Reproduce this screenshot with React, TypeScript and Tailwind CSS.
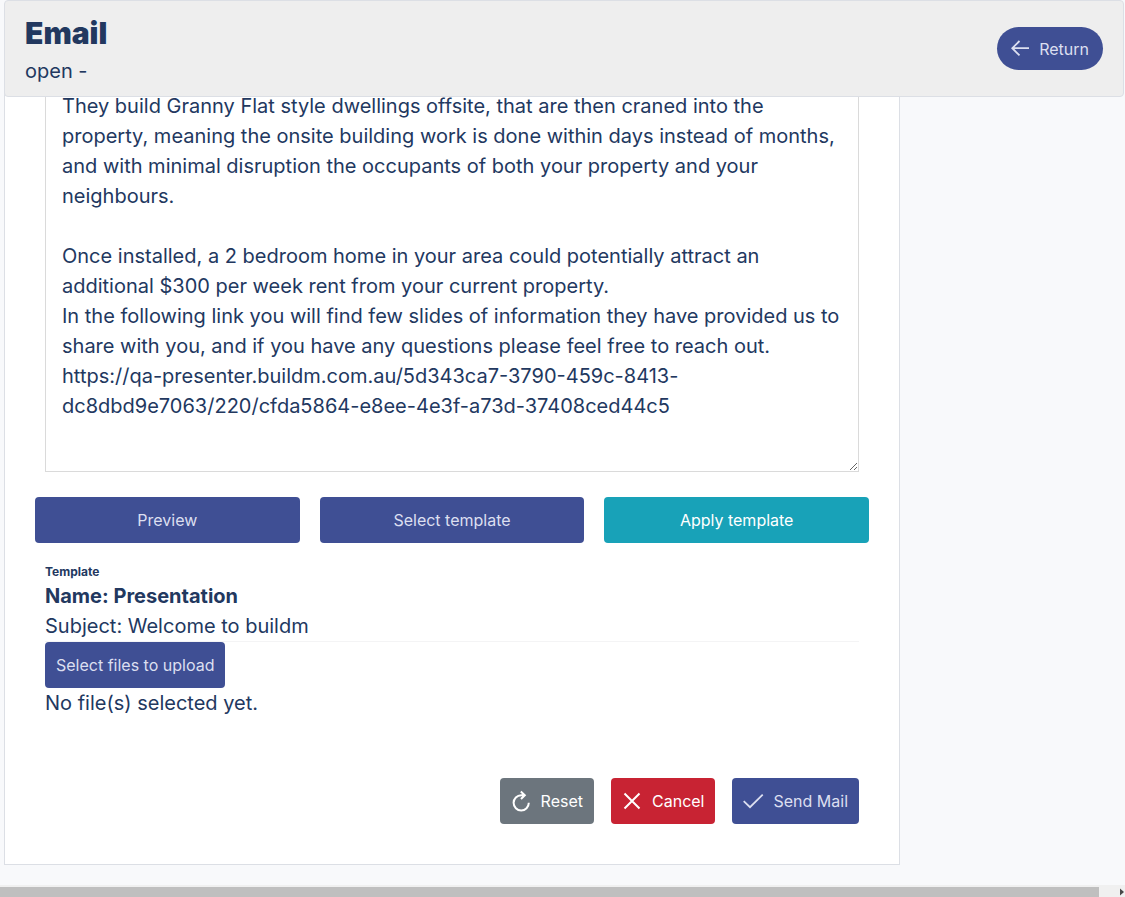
import React from "react";

const message = `They build Granny Flat style dwellings offsite, that are then craned into the property, meaning the onsite building work is done within days instead of months, and with minimal disruption the occupants of both your property and your neighbours.

Once installed, a 2 bedroom home in your area could potentially attract an additional $300 per week rent from your current property.
In the following link you will find few slides of information they have provided us to share with you, and if you have any questions please feel free to reach out.
https://qa-presenter.buildm.com.au/5d343ca7-3790-459c-8413-dc8dbd9e7063/220/cfda5864-e8ee-4e3f-a73d-37408ced44c5
`;

function Icon({ children }: { children: React.ReactNode }) {
  return (
    <svg
      viewBox="0 0 20 20"
      className="size-5 shrink-0 overflow-visible"
      fill="none"
      stroke="currentColor"
      strokeWidth="2"
      aria-hidden="true"
    >
      {children}
    </svg>
  );
}

const base = "flex h-[46px] items-center justify-center rounded text-base";
const indigo = "bg-[#3f4f94] text-[#dcdff0]";

export default function App() {
  return (
    <div className="flex min-h-screen flex-col bg-[#f8f9fb] font-[Inter,sans-serif] text-xl leading-[30px] text-[#22385f]">
      <header className="relative z-10 ml-1 mr-px flex h-[97px] items-center justify-between rounded border border-[#dcdfe5] bg-[#eeeeee] px-5">
        <div>
          <h1 className="text-[30px] leading-[45px] font-black">Email</h1>
          <p>open -</p>
        </div>
        <button type="button" className={`flex h-[43px] items-center gap-2 rounded-full px-3.5 text-base ${indigo}`}>
          <Icon>
            <path d="M18 9.2H1.5M8.5 2L1.3 9.2L8.5 16.4" strokeWidth="1.8" />
          </Icon>
          Return
        </button>
      </header>

      <div className="ml-1 mr-px">
        <main className="w-4/5 border border-t-0 border-[#dcdfe5] bg-white px-[30px] pb-10">
          <div className="-mt-1.5 px-2.5">
            <textarea
              aria-label="Message"
              defaultValue={message}
              className="block h-[381px] w-full resize overflow-hidden border border-t-0 border-[#dadada] bg-white px-4 outline-none"
            />
          </div>
          <div className="mt-[25px] grid grid-cols-3 gap-5">
            <button type="button" className={`${base} ${indigo}`}>Preview</button>
            <button type="button" className={`${base} ${indigo}`}>Select template</button>
            <button type="button" className={`${base} bg-[#18a2b8] text-white`}>Apply template</button>
          </div>
          <div className="px-2.5 pt-5">
            <h2 className="text-xs leading-[18px] font-bold">Template</h2>
            <p className="font-bold">Name: Presentation</p>
            <p className="border-b border-[#f4f4f5]">Subject: Welcome to buildm</p>
            <button type="button" className={`${base} ${indigo} px-[11px]`}>Select files to upload</button>
            <p>No file(s) selected yet.</p>
            <div className="mt-[60px] flex justify-end gap-[17px]">
              <button type="reset" className={`${base} gap-2.5 bg-[#6c757d] px-[11px] text-white`}>
                <Icon>
                  <path d="M13.5 4.2H10.2A7.6 7.6 0 1 0 17.8 11.8M9.8 0.6L13.8 4.2L10 8" />
                </Icon>
                Reset
              </button>
              <button type="button" className={`${base} gap-2.5 bg-[#c82333] px-[11px] text-white`}>
                <Icon>
                  <path d="M2.5 2.5L17.5 17.5M17.5 2.5L2.5 17.5" />
                </Icon>
                Cancel
              </button>
              <button type="submit" className={`${base} ${indigo} gap-2.5 px-[11px]`}>
                <Icon>
                  <path d="M0.7 10.2L7 16.2L19.7 3.7" strokeWidth="1.8" />
                </Icon>
                Send Mail
              </button>
            </div>
          </div>
        </main>
      </div>

      <div className="mt-auto flex h-3 items-end bg-[#f0f0f0]" aria-hidden="true">
        <div className="h-2.5 grow bg-[#bfbfbf]" />
        <svg viewBox="0 0 26 10" className="h-2.5 w-[26px]" fill="#484848">
          <path d="M21 1.5V8.5L25 5Z" />
        </svg>
      </div>
    </div>
  );
}
